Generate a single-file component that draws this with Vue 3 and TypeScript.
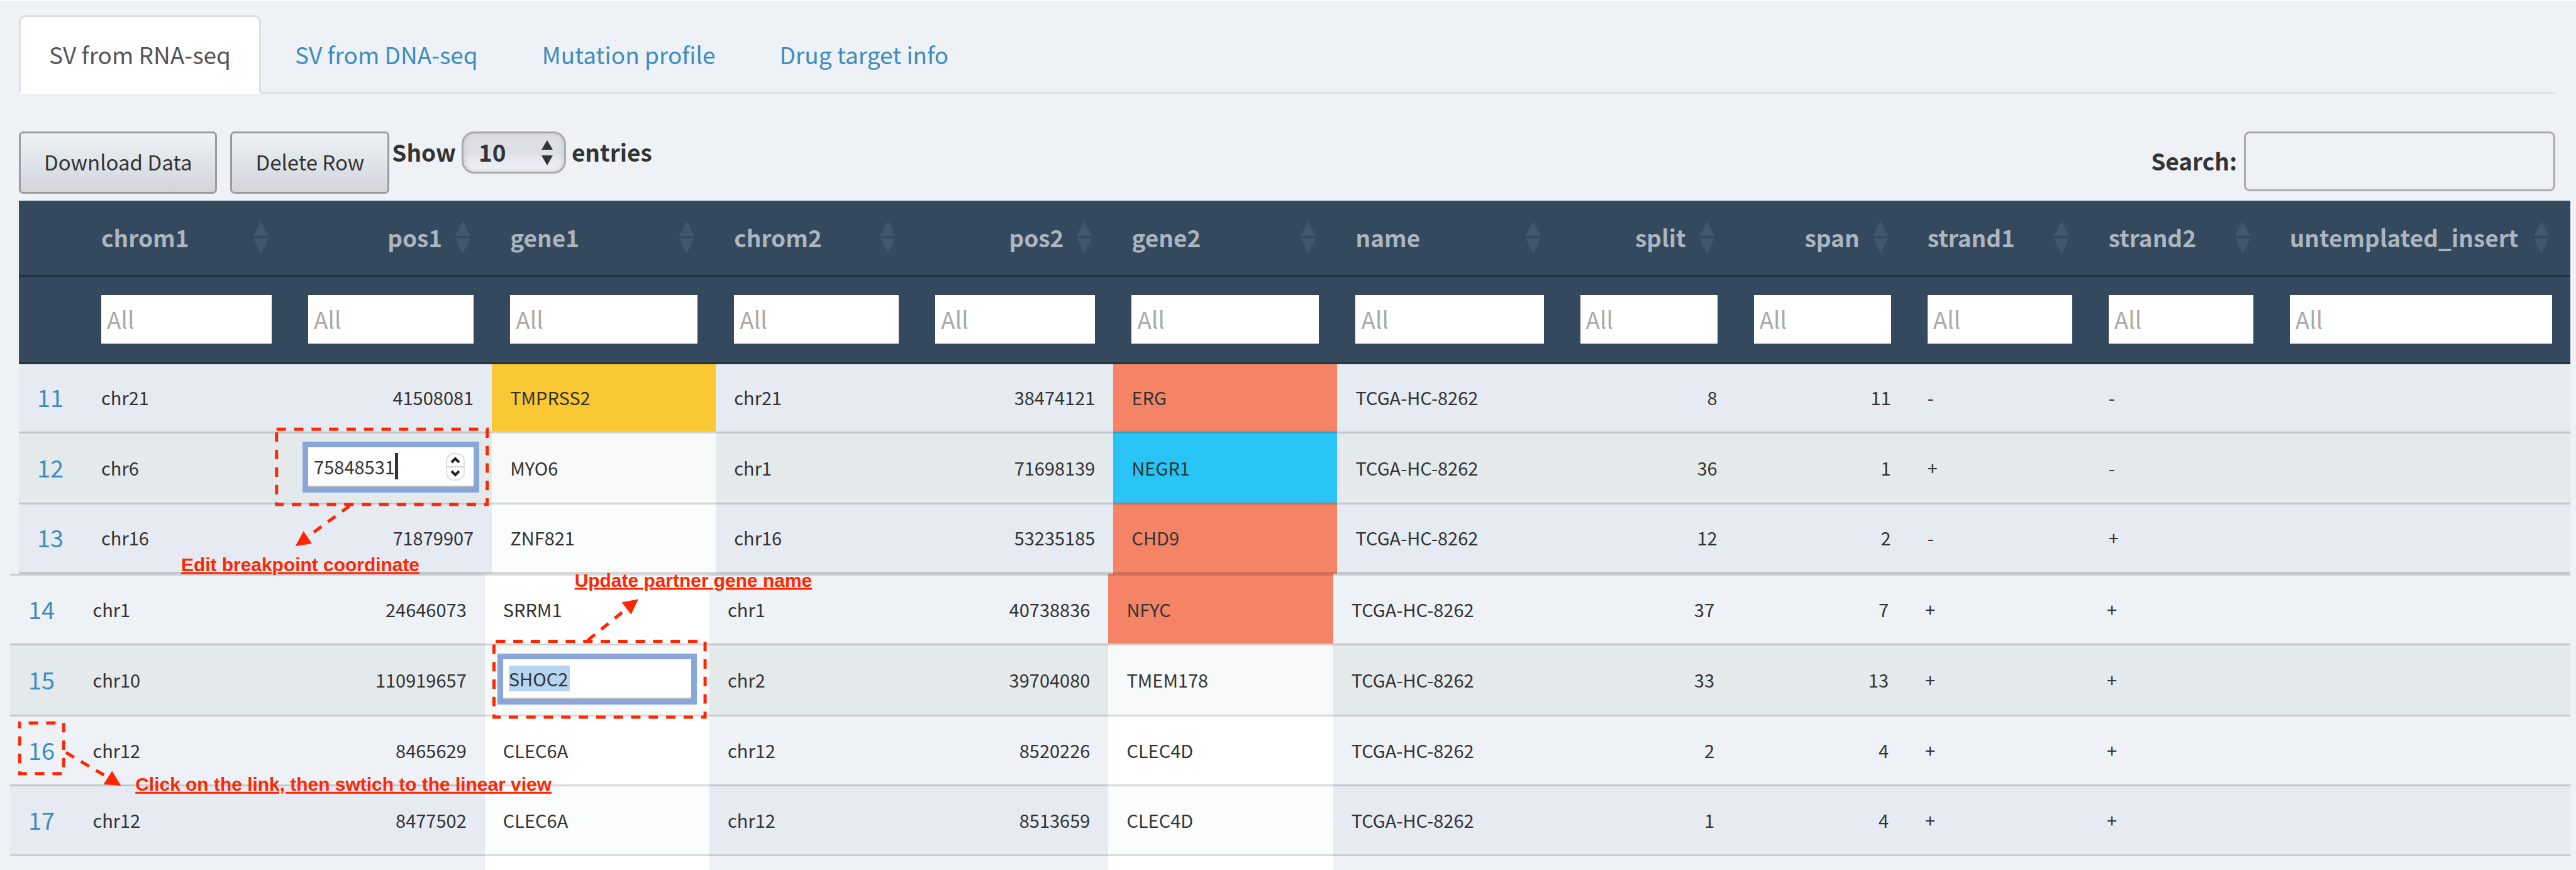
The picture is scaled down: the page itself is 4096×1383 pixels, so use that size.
<script setup lang="ts">
import { ref } from 'vue'

interface Column {
  key: keyof Variant
  width: number
  numeric?: boolean
}

interface Variant {
  id: string
  chrom1: string
  pos1: string
  gene1: string
  chrom2: string
  pos2: string
  gene2: string
  name: string
  split: string
  span: string
  strand1: string
  strand2: string
  untemplated_insert: string
}

const tabs = ['SV from RNA-seq', 'SV from DNA-seq', 'Mutation profile', 'Drug target info']
const activeTab = ref(tabs[0])
const pageLength = ref('10')
const search = ref('')

// Relative column widths; the leading row-number column takes 102.
const columns: Column[] = [
  { key: 'chrom1', width: 329 },
  { key: 'pos1', width: 321, numeric: true },
  { key: 'gene1', width: 356 },
  { key: 'chrom2', width: 320 },
  { key: 'pos2', width: 312, numeric: true },
  { key: 'gene2', width: 356 },
  { key: 'name', width: 357 },
  { key: 'split', width: 276, numeric: true },
  { key: 'span', width: 276, numeric: true },
  { key: 'strand1', width: 288 },
  { key: 'strand2', width: 288 },
  { key: 'untemplated_insert', width: 475 },
]
const total = 102 + columns.reduce((sum, c) => sum + c.width, 0)
const share = (w: number) => ({ width: (w / total) * 100 + '%' })

const make = (...v: string[]): Variant => ({
  id: v[0], chrom1: v[1], pos1: v[2], gene1: v[3], chrom2: v[4], pos2: v[5], gene2: v[6],
  name: v[7], split: v[8], span: v[9], strand1: v[10], strand2: v[11], untemplated_insert: '',
})

const sample = 'TCGA-HC-8262'
const upper = ref([
  make('11', 'chr21', '41508081', 'TMPRSS2', 'chr21', '38474121', 'ERG', sample, '8', '11', '-', '-'),
  make('12', 'chr6', '75848531', 'MYO6', 'chr1', '71698139', 'NEGR1', sample, '36', '1', '+', '-'),
  make('13', 'chr16', '71879907', 'ZNF821', 'chr16', '53235185', 'CHD9', sample, '12', '2', '-', '+'),
])
const lower = ref([
  make('14', 'chr1', '24646073', 'SRRM1', 'chr1', '40738836', 'NFYC', sample, '37', '7', '+', '+'),
  make('15', 'chr10', '110919657', 'SHOC2', 'chr2', '39704080', 'TMEM178', sample, '33', '13', '+', '+'),
  make('16', 'chr12', '8465629', 'CLEC6A', 'chr12', '8520226', 'CLEC4D', sample, '2', '4', '+', '+'),
  make('17', 'chr12', '8477502', 'CLEC6A', 'chr12', '8513659', 'CLEC4D', sample, '1', '4', '+', '+'),
  make('', '', '', '', '', '', '', '', '', '', '', ''),
])

const highlights: Record<string, string> = {
  TMPRSS2: 'yellow',
  ERG: 'coral',
  CHD9: 'coral',
  NFYC: 'coral',
  NEGR1: 'blue',
}

const rowClass = (r: Variant) => {
  if (r.id === '12' || r.id === '15') return 'hover'
  return Number(r.id) % 2 ? 'odd' : 'even'
}

const cellClass = (r: Variant, c: Column) => [
  c.numeric ? 'num' : '',
  c.key === 'gene1' || c.key === 'gene2' ? 'gene' : '',
  highlights[r[c.key]] ?? '',
]

const editing = (r: Variant, c: Column) =>
  (r.id === '12' && c.key === 'pos1') || (r.id === '15' && c.key === 'gene1')
</script>

<template>
  <main class="page">
    <nav class="tabs">
      <a v-for="t in tabs" :key="t" href="#" :class="{ active: t === activeTab }" @click.prevent="activeTab = t">{{ t }}</a>
    </nav>

    <div class="toolbar">
      <button type="button" class="btn">Download Data</button>
      <button type="button" class="btn">Delete Row</button>
      <label class="length">
        <span class="caption">Show</span>
        <span class="select-wrap">
          <select v-model="pageLength">
            <option>10</option>
            <option>25</option>
            <option>50</option>
          </select>
          <svg viewBox="0 0 18 40" aria-hidden="true"><path d="M9 0 18 15H0zM9 40 18 24H0z" fill="#333" /></svg>
        </span>
        <span class="caption">entries</span>
      </label>
      <label class="search">
        <span class="caption">Search:</span>
        <input v-model="search" type="text" />
      </label>
    </div>

    <table class="grid head">
      <colgroup>
        <col :style="share(102)" />
        <col v-for="c in columns" :key="c.key" :style="share(c.width)" />
      </colgroup>
      <thead>
        <tr class="titles">
          <th></th>
          <th v-for="c in columns" :key="c.key" :class="{ num: c.numeric }">
            {{ c.key }}
            <svg class="sort" viewBox="0 0 24 52" aria-hidden="true"><path d="M12 0 24 24H0zM12 52 24 28H0z" fill="#43576b" /></svg>
          </th>
        </tr>
        <tr class="filters">
          <td></td>
          <td v-for="c in columns" :key="c.key"><input type="text" placeholder="All" :aria-label="c.key" /></td>
        </tr>
      </thead>
      <tbody>
        <tr v-for="r in upper" :key="r.id" :class="rowClass(r)">
          <td class="index"><a href="#">{{ r.id }}</a></td>
          <td v-for="c in columns" :key="c.key" :class="cellClass(r, c)">
            <div v-if="editing(r, c)" class="editor">
              <input v-model="r[c.key]" class="caret" type="text" inputmode="numeric" :aria-label="c.key" />
              <svg class="spinner" viewBox="0 0 30 44" aria-hidden="true">
                <rect x="1" y="1" width="28" height="42" rx="12" fill="#fff" stroke="#dedede" stroke-width="2" />
                <path d="M1 22H29" stroke="#d4d4d4" stroke-width="2" />
                <path d="M9 15 15 9 21 15M9 29 15 35 21 29" fill="none" stroke="#222" stroke-width="4" />
              </svg>
            </div>
            <template v-else>{{ r[c.key] }}</template>
          </td>
        </tr>
      </tbody>
    </table>

    <table class="grid rest">
      <colgroup>
        <col :style="share(102)" />
        <col v-for="c in columns" :key="c.key" :style="share(c.width)" />
      </colgroup>
      <tbody>
        <tr v-for="r in lower" :key="r.id" :class="rowClass(r)">
          <td class="index"><a href="#">{{ r.id }}</a></td>
          <td v-for="c in columns" :key="c.key" :class="cellClass(r, c)">
            <div v-if="editing(r, c)" class="editor">
              <input v-model="r[c.key]" class="selected" type="text" :aria-label="c.key" />
            </div>
            <template v-else>{{ r[c.key] }}</template>
          </td>
        </tr>
      </tbody>
    </table>

    <svg class="notes" viewBox="0 0 5747 1941">
      <g fill="none" stroke="#ff2600" stroke-width="7" stroke-dasharray="21 18">
        <rect x="617" y="956" width="470" height="168" />
        <rect x="1102" y="1429" width="471" height="169" stroke-dashoffset="-4" />
        <rect x="44" y="1611" width="98" height="113" stroke-dashoffset="-20" />
        <path d="M780 1127 690 1193M1311 1427 1397 1357M147 1677 238 1731" />
      </g>
      <g fill="#ff2600">
        <path d="M659 1217 677 1183 696 1211zM1424 1335 1387 1342 1408 1369zM270 1751 250 1718 231 1748z" />
        <text x="404" y="1272">Edit breakpoint coordinate</text>
        <text x="1282" y="1307">Update partner gene name</text>
        <text x="302" y="1762">Click on the link, then swtich to the linear view</text>
      </g>
    </svg>
  </main>
</template>

<style>
body {
  margin: 0;
  background: #eef1f6;
}
</style>

<style scoped>
.page {
  position: relative;
  box-sizing: border-box;
  height: 100vh;
  overflow: hidden;
  padding: 23px 33px 0 30px;
  border-top: 1px solid #fff;
  background: #eef1f6;
  color: #333;
  font: 29px/40px "Noto Sans CJK SC", "Noto Sans", sans-serif;
}
.page * {
  box-sizing: border-box;
}
a {
  color: #3c8dbc;
  text-decoration: none;
}
input,
select,
button {
  font: inherit;
  color: inherit;
  margin: 0;
}
.tabs {
  display: flex;
  gap: 6px;
  height: 125px;
  border-bottom: 3px solid #dddfe1;
}
.tabs a {
  height: 125px;
  padding: 0 45px;
  border: 3px solid transparent;
  border-radius: 11px 11px 0 0;
  font-size: 37px;
  line-height: 119px;
}
.tabs a.active {
  background: #fff;
  border-color: #dddfe1;
  border-bottom-color: #fff;
  color: #555;
}
.toolbar {
  display: flex;
  align-items: flex-start;
  margin: 60px 0 11px;
  height: 99px;
}
.btn {
  height: 99px;
  margin-right: 21px;
  padding: 0 37px 4px;
  border: 3px solid #999c9f;
  border-radius: 7px;
  background: linear-gradient(#eef2f7, #e2e7ec 40%, #dce0e8 60%, #d3d5d8);
  font-size: 33px;
}
.btn + .btn {
  margin-right: 4px;
}
.length,
.search {
  display: flex;
  align-items: center;
  gap: 9px;
  font-size: 37px;
  font-weight: bold;
}
.caption {
  padding-bottom: 4px;
}
.select-wrap {
  position: relative;
}
.select-wrap select {
  display: block;
  appearance: none;
  width: 166px;
  height: 67px;
  padding: 0 24px 4px;
  border: 3px solid #a9aaab;
  border-radius: 20px;
  background: linear-gradient(#dfe0e4, #dcdfe6 50%, #f3f6fa);
  box-shadow: inset 0 0 10px #c4c5c9;
}
.select-wrap svg {
  position: absolute;
  right: 21px;
  top: 14px;
  width: 18px;
  height: 40px;
  pointer-events: none;
}
.search {
  gap: 11px;
  margin-left: auto;
}
.search input {
  width: 495px;
  height: 95px;
  border: 3px solid #aaabac;
  border-radius: 9px;
  background: transparent;
}
.grid {
  table-layout: fixed;
  border-collapse: separate;
  border-spacing: 0;
}
.head {
  width: calc(100% + 24px);
}
.rest {
  width: calc(100% + 38px);
  margin-left: -14px;
}
th,
td {
  padding: 0 29px 3px;
  text-align: left;
  white-space: nowrap;
}
th.num,
td.num {
  text-align: right;
}
thead {
  background: #34495e;
}
.titles th {
  position: relative;
  height: 121px;
  border-bottom: 3px solid #243342;
  color: #acb6bf;
  font-size: 37px;
}
.titles th.num {
  padding-right: 79px;
}
.sort {
  position: absolute;
  right: 34px;
  top: 32px;
  width: 24px;
  height: 52px;
}
.filters td {
  height: 139px;
  padding-bottom: 0;
  border-bottom: 3px solid #243342;
}
.filters input {
  display: block;
  width: 100%;
  height: 78px;
  padding: 0 9px;
  border: 0;
  border-bottom: 2px solid #c0c0c0;
  background: #fff;
  font-size: 37px;
}
.filters input::placeholder {
  color: #aaa;
  opacity: 1;
}
tbody td {
  height: 111px;
  border-top: 3px solid rgba(0, 0, 0, 0.15);
}
.head tbody tr:first-child td {
  height: 107px;
  border-top: 0;
}
.head tbody tr:last-child td {
  height: 113px;
  border-bottom: 3px solid rgba(0, 0, 0, 0.15);
}
tr.hover td {
  height: 113px;
  background: #e4e9ec;
}
tr.odd td {
  background: #e6eaf2;
}
tr td.gene {
  background: #fff;
}
tr.hover td.gene {
  background: #f8faf9;
}
tr.odd td.gene {
  background: #fbfdfc;
}
tr td.yellow.yellow.yellow {
  background: #fac832;
}
tr td.coral.coral.coral {
  background: #f58366;
}
tr td.blue.blue.blue {
  background: #28c4f5;
}
.index {
  font-size: 38px;
}
.editor {
  position: relative;
}
.editor input {
  display: block;
  width: 100%;
  height: 63px;
  padding: 0 9px 2px;
  border: 0;
  border-bottom: 2px solid #c0c0c0;
  outline: 9px solid #88a6d8;
  background: #fff;
}
.editor .caret {
  background: linear-gradient(#333, #333) 138px 9px / 5px 42px no-repeat #fff;
}
.editor .selected {
  background: linear-gradient(#b5d5f2, #b5d5f2) 9px 10px / 97px 41px no-repeat #fff;
}
.spinner {
  position: absolute;
  right: 14px;
  top: 9px;
  width: 30px;
  height: 44px;
}
.notes {
  position: absolute;
  left: 0;
  top: 0;
  width: 100%;
  pointer-events: none;
}
.notes text {
  font: bold 42px "Liberation Sans", Arial, sans-serif;
  text-decoration: underline;
}
</style>
